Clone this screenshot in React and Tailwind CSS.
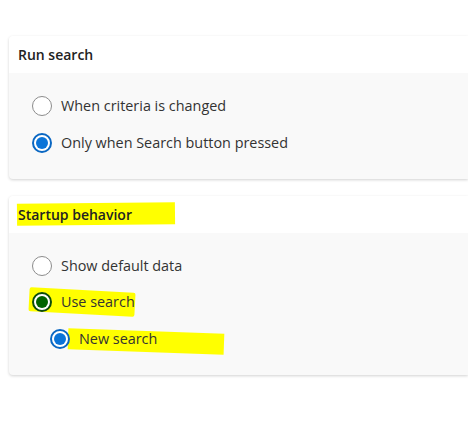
import { useState } from 'react'

function Radio({ checked, color = 'blue', label, onClick, highlight }) {
  const ring = color === 'green' ? 'border-[#0d4d0d]' : 'border-[#0a67c2]'
  const dot = color === 'green' ? 'bg-[#006400]' : 'bg-[#0b74d8]'
  return (
    <button onClick={onClick} className="relative flex items-center gap-[9px] h-[20px] text-left">
      {highlight}
      <span className={`relative w-[20px] h-[20px] rounded-full flex items-center justify-center ${checked ? `border-2 ${ring} bg-white` : 'border border-[#8c8c8c] bg-white'}`}>
        {checked && <span className={`w-[12px] h-[12px] rounded-full ${dot}`} />}
      </span>
      <span className="relative text-[14.4px] text-[#333333]">{label}</span>
    </button>
  )
}

function Card({ title, titleHighlight, children }) {
  return (
    <div className="bg-[#f9f9f9] rounded-l-[4px] shadow-[0_1px_3px_rgba(0,0,0,0.18)]">
      <div className="relative bg-white rounded-tl-[4px] h-[37px] flex items-center px-[9px]">
        {titleHighlight && <span className="absolute left-[8px] top-[7px] w-[158px] h-[22px] bg-[#ffff00] rotate-[-0.6deg]" />}
        <span className="relative text-[14px] font-semibold text-[#222222]">{title}</span>
      </div>
      {children}
    </div>
  )
}

export default function App() {
  const [run, setRun] = useState('button')
  const [startup, setStartup] = useState('search')

  return (
    <div className="w-[468px] h-[429px] bg-white pt-[36px] pl-[9px] overflow-hidden" style={{ fontFamily: '"Open Sans", "Noto Sans", sans-serif' }}>
      <Card title="Run search">
        <div className="flex flex-col gap-[17px] pl-[23px] pt-[23px] pb-[26px]">
          <Radio checked={run === 'changed'} onClick={() => setRun('changed')} label="When criteria is changed" />
          <Radio checked={run === 'button'} onClick={() => setRun('button')} label="Only when Search button pressed" />
        </div>
      </Card>

      <div className="h-[17px]" />

      <Card title="Startup behavior" titleHighlight>
        <div className="flex flex-col pl-[23px] pt-[23px] pb-[26px]">
          <Radio checked={startup === 'default'} onClick={() => setStartup('default')} label="Show default data" />
          <div className="h-[16px]" />
          <Radio
            checked={startup === 'search'}
            color="green"
            onClick={() => setStartup('search')}
            label="Use search"
            highlight={<span className="absolute left-[-3px] top-[-2px] w-[106px] h-[24px] bg-[#ffff00] rotate-[3deg] rounded-[2px]" />}
          />
          <div className="h-[17px]" />
          <div className="pl-[18px]">
            <Radio
              checked
              onClick={() => {}}
              label="New search"
              highlight={<span className="absolute left-[18px] top-[2px] w-[156px] h-[21px] bg-[#ffff00] rotate-[2deg]" />}
            />
          </div>
        </div>
      </Card>
    </div>
  )
}
